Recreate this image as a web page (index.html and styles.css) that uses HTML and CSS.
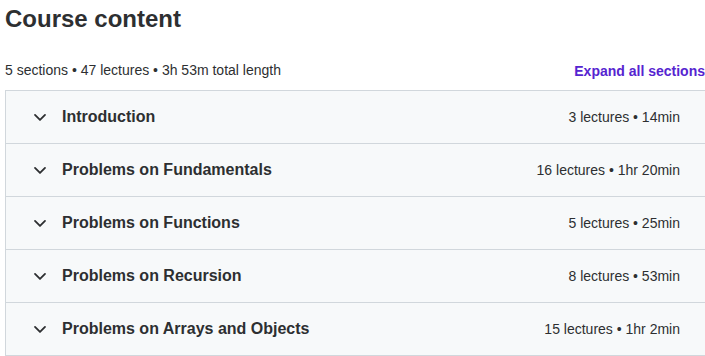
FILE: index.html
```html
<!DOCTYPE html>
<html lang="en">

<head>
    <meta charset="UTF-8">
    <meta name="viewport" content="width=device-width, initial-scale=1.0">
    <title>Course content</title>
    <link rel="stylesheet" href="styles.css">
</head>

<body>
    <div class="curriculum">
        <h2>Course content</h2>
        <div class="summary">
            <span>5 sections • 47 lectures • 3h 53m total length</span>
            <button class="expand-all">Expand all sections</button>
        </div>

        <div class="sections">
            <div class="section">
                <svg class="chevron" viewBox="0 0 24 24"><path d="M6 9.5l6 6 6-6"/></svg>
                <span class="title">Introduction</span>
                <span class="meta">3 lectures • 14min</span>
            </div>
            <div class="section">
                <svg class="chevron" viewBox="0 0 24 24"><path d="M6 9.5l6 6 6-6"/></svg>
                <span class="title">Problems on Fundamentals</span>
                <span class="meta">16 lectures • 1hr 20min</span>
            </div>
            <div class="section">
                <svg class="chevron" viewBox="0 0 24 24"><path d="M6 9.5l6 6 6-6"/></svg>
                <span class="title">Problems on Functions</span>
                <span class="meta">5 lectures • 25min</span>
            </div>
            <div class="section">
                <svg class="chevron" viewBox="0 0 24 24"><path d="M6 9.5l6 6 6-6"/></svg>
                <span class="title">Problems on Recursion</span>
                <span class="meta">8 lectures • 53min</span>
            </div>
            <div class="section">
                <svg class="chevron" viewBox="0 0 24 24"><path d="M6 9.5l6 6 6-6"/></svg>
                <span class="title">Problems on Arrays and Objects</span>
                <span class="meta">15 lectures • 1hr 2min</span>
            </div>
        </div>
    </div>
</body>

</html>
```

FILE: styles.css
```css
body {
    margin: 0;
    padding: 0;
    background-color: #fff;
    font-family: "Liberation Sans", Arial, sans-serif;
    color: #2d2f31;
}

.curriculum {
    width: 700px;
    padding-left: 5px;
}

h2 {
    font-size: 24px;
    line-height: 1.2;
    margin: 5px 0 0;
    color: #2d2f31;
}

.summary {
    display: flex;
    justify-content: space-between;
    align-items: center;
    margin-top: 27px;
    margin-bottom: 10px;
    font-size: 14px;
    line-height: 1.4;
}

.expand-all {
    padding: 0;
    border: none;
    background: none;
    font-family: inherit;
    font-size: 14px;
    font-weight: bold;
    color: #5624d0;
    cursor: pointer;
}

.sections {
    border: 1px solid #d1d7dc;
    border-right: none;
}

.section {
    display: flex;
    align-items: center;
    height: 52px;
    padding: 0 25px 0 24px;
    background-color: #f7f9fa;
    border-bottom: 1px solid #d1d7dc;
}

.section:last-child {
    border-bottom: none;
}

.chevron {
    width: 20px;
    height: 20px;
    margin-right: 12px;
    fill: none;
    stroke: #2d2f31;
    stroke-width: 2.2;
    stroke-linecap: round;
    stroke-linejoin: round;
}

.title {
    flex: 1;
    font-size: 16px;
    font-weight: bold;
}

.meta {
    font-size: 14px;
}
```
